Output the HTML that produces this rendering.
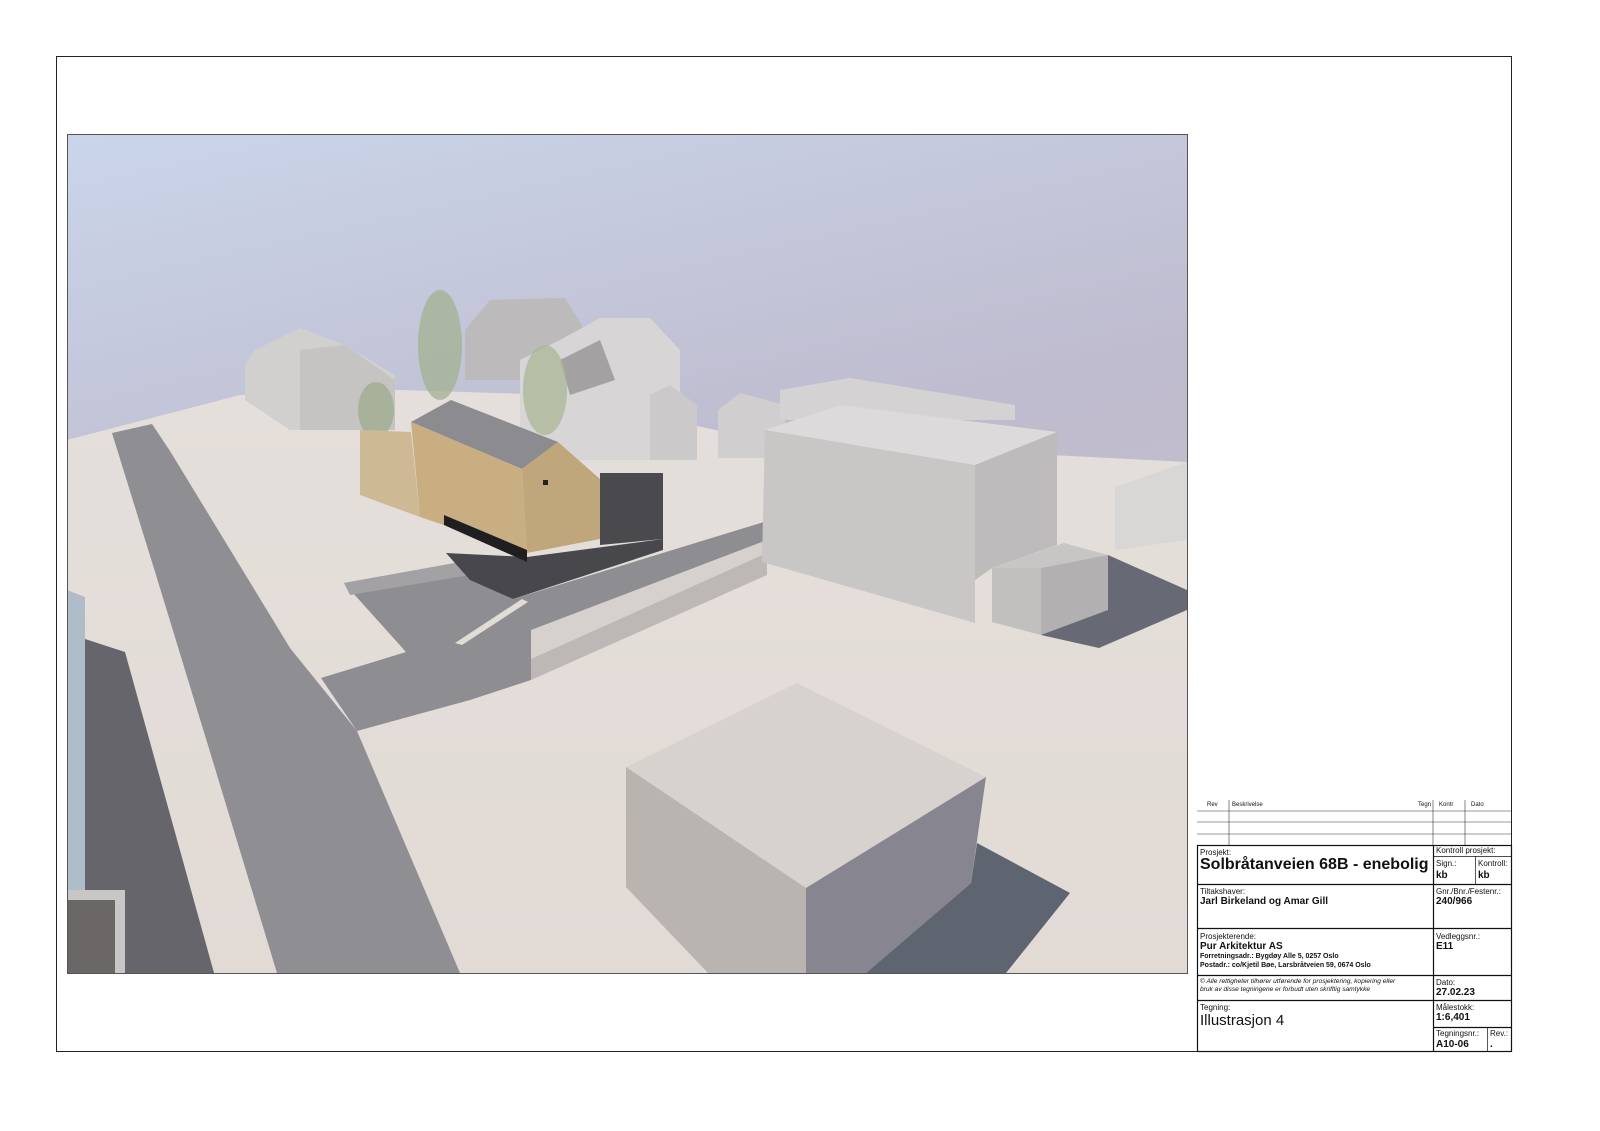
<!DOCTYPE html>
<html><head><meta charset="utf-8"><style>
html,body{margin:0;padding:0;background:#fff;}
body{width:1600px;height:1131px;position:relative;overflow:hidden;font-family:"Liberation Sans",Arial,sans-serif;}
svg{position:absolute;left:0;top:0;}
.t{position:absolute;color:#111;white-space:nowrap;}
</style></head><body>
<svg width="1600" height="1131" viewBox="0 0 1600 1131">
<defs>
<linearGradient id="sky" x1="0" y1="0" x2="0.3" y2="1">
<stop offset="0" stop-color="#cad5ea"/><stop offset="0.5" stop-color="#bfbccf"/><stop offset="1" stop-color="#c6bccb"/>
</linearGradient>
<linearGradient id="gr" x1="0" y1="0" x2="0" y2="1">
<stop offset="0" stop-color="#e5dfdb"/><stop offset="1" stop-color="#e1dad5"/>
</linearGradient>
<clipPath id="c"><rect x="67" y="134" width="1120" height="839"/></clipPath>
</defs>
<rect x="56.5" y="56.5" width="1455" height="995" fill="none" stroke="#222" stroke-width="1"/>
<g clip-path="url(#c)">
<rect x="67" y="134" width="1120" height="839" fill="url(#sky)"/>
<!-- ground -->
<polygon points="67,440 240,395 400,390 560,395 760,440 1187,462 1187,973 67,973" fill="url(#gr)"/>
<!-- back buildings -->
<polygon points="245,365 255,350 300,328 345,345 395,375 395,430 290,430 245,400" fill="#d2cfcf"/>
<polygon points="300,350 345,345 395,380 395,430 300,430" fill="#c6c3c3"/>
<polygon points="465,330 490,300 565,298 585,330 585,380 465,380" fill="#bcbaba"/>
<polygon points="520,360 560,340 600,318 650,318 680,350 680,460 520,460" fill="#d7d5d5"/>
<polygon points="560,360 600,340 615,380 570,395" fill="#a3a1a2"/>
<polygon points="650,395 670,385 697,405 697,460 650,460" fill="#cbc9c9"/>
<polygon points="718,410 740,393 785,405 785,458 718,458" fill="#d0cece"/>
<!-- road -->
<polygon points="112,433 152,424 170,451 290,648 357,731 460,973 277,973 214,765 156,575" fill="#8f8e93"/>
<!-- left building -->
<polygon points="85,639 125,652 214,973 120,973 120,890 85,890" fill="#66656b"/>
<polygon points="67,590 85,597 85,890 67,890" fill="#aebdc9"/>
<polygon points="67,890 125,890 125,973 67,973" fill="#c9c6c6"/>
<polygon points="67,900 115,900 115,973 67,973" fill="#6c6767"/>
<!-- driveway -->
<polygon points="344,583 455,563 513,599 767,521 767,553 531,659 531,680 470,700 357,731 321,678 406,652" fill="#8e8d92"/>
<polygon points="455,643 522,599 528,602 462,645" fill="#e2dcd7"/>
<polygon points="531,630 767,540 767,555 531,659" fill="#d6d1cd"/>
<polygon points="531,659 767,553 767,575 531,680" fill="#bdb8b6"/>
<polygon points="344,583 455,563 470,575 350,595" fill="#a3a1a4"/>
<!-- big right box -->
<polygon points="780,390 850,378 1015,405 1015,420 780,420" fill="#d4d2d2"/>
<polygon points="765,430 840,405 1057,432 975,465" fill="#dcdada"/>
<polygon points="765,430 975,465 975,623 762,562" fill="#c9c6c6"/>
<polygon points="975,465 1057,432 1057,545 992,568 975,580" fill="#bdbbbb"/>
<polygon points="1108,555 1187,590 1187,610 1099,648 1041,635" fill="#676a75"/>
<polygon points="992,568 1064,543 1108,555 1041,568" fill="#c8c5c5"/>
<polygon points="992,568 1041,568 1041,635 992,622" fill="#c2bfbf"/>
<polygon points="1041,568 1108,555 1108,610 1041,635" fill="#b2b0b1"/>
<polygon points="1115,487 1187,462 1187,540 1115,550" fill="#d9d6d6"/>
<!-- front box -->
<polygon points="971,883 977,843 1070,893 1006,973 866,973" fill="#5e6470"/>
<polygon points="626,767 797,683 986,777 806,888" fill="#d8d2ce"/>
<polygon points="626,767 806,888 806,973 708,973 626,887" fill="#bab4b1"/>
<polygon points="806,888 986,777 971,883 866,973 806,973" fill="#878690"/>
<!-- trees -->
<ellipse cx="440" cy="345" rx="22" ry="55" fill="#a3b190" opacity="0.75"/>
<ellipse cx="545" cy="390" rx="22" ry="45" fill="#a9b796" opacity="0.75"/>
<ellipse cx="376" cy="410" rx="18" ry="28" fill="#9eab8b" opacity="0.75"/>
<!-- main house -->
<polygon points="360,430 411,432 420,517 360,495" fill="#cdb994"/>
<polygon points="600,473 663,473 663,539 600,545" fill="#4a4a4e"/>
<polygon points="411,422 451,400 558,442 522,469" fill="#8b8b90"/>
<polygon points="411,422 522,469 527,553 420,517" fill="#c9ae82"/>
<polygon points="522,469 558,442 600,479 600,539 527,553" fill="#c0a67b"/>
<polygon points="446,553 527,557 663,539 663,550 513,599 470,580" fill="#48484c"/>
<polygon points="444,515 527,550 527,562 444,525" fill="#1f1f22"/>
<rect x="543" y="480" width="5" height="5" fill="#222"/>
</g>
<rect x="67.5" y="134.5" width="1120" height="839" fill="none" stroke="#555" stroke-width="1"/>
<!-- title block lines -->
<g stroke="#333" stroke-width="0.6" fill="none">
<line x1="1197" y1="811" x2="1511" y2="811"/>
<line x1="1197" y1="822" x2="1511" y2="822"/>
<line x1="1197" y1="834" x2="1511" y2="834"/>
<line x1="1229" y1="800" x2="1229" y2="845"/>
<line x1="1433" y1="800" x2="1433" y2="845"/>
<line x1="1465" y1="800" x2="1465" y2="845"/>
</g>
<g stroke="#111" stroke-width="1.2" fill="none">
<rect x="1197.5" y="845.5" width="314" height="206"/>
<line x1="1433.5" y1="845" x2="1433.5" y2="1051"/>
<line x1="1197" y1="884.5" x2="1511" y2="884.5"/>
<line x1="1197" y1="928.5" x2="1511" y2="928.5"/>
<line x1="1197" y1="975.5" x2="1511" y2="975.5"/>
<line x1="1197" y1="1000.5" x2="1511" y2="1000.5"/>
<line x1="1433" y1="1027.5" x2="1511" y2="1027.5"/>
<line x1="1433" y1="856.5" x2="1511" y2="856.5" stroke-width="0.7"/>
<line x1="1475.5" y1="856" x2="1475.5" y2="884" stroke-width="0.7"/>
<line x1="1487.5" y1="1027" x2="1487.5" y2="1051" stroke-width="0.7"/>
</g>
</svg>
<div class="t" style="left:1207px;top:802px;font-size:6px">Rev</div>
<div class="t" style="left:1232px;top:802px;font-size:6px">Beskrivelse</div>
<div class="t" style="left:1418px;top:802px;font-size:6px">Tegn</div>
<div class="t" style="left:1439px;top:802px;font-size:6px">Kontr</div>
<div class="t" style="left:1471px;top:802px;font-size:6px">Dato</div>
<div class="t" style="left:1200px;top:848px;font-size:8px">Prosjekt:</div>
<div class="t" style="left:1200px;top:856px;font-size:16px;font-weight:bold">Solbråtanveien 68B - enebolig</div>
<div class="t" style="left:1436px;top:846px;font-size:8px">Kontroll prosjekt:</div>
<div class="t" style="left:1436px;top:859px;font-size:8px">Sign.:</div>
<div class="t" style="left:1436px;top:870px;font-size:10px;font-weight:bold">kb</div>
<div class="t" style="left:1478px;top:859px;font-size:8px">Kontroll:</div>
<div class="t" style="left:1478px;top:870px;font-size:10px;font-weight:bold">kb</div>
<div class="t" style="left:1200px;top:887px;font-size:8px">Tiltakshaver:</div>
<div class="t" style="left:1200px;top:896px;font-size:10px;font-weight:bold">Jarl Birkeland og Amar Gill</div>
<div class="t" style="left:1436px;top:887px;font-size:8px">Gnr./Bnr./Festenr.:</div>
<div class="t" style="left:1436px;top:896px;font-size:10px;font-weight:bold">240/966</div>
<div class="t" style="left:1200px;top:932px;font-size:8px">Prosjekterende:</div>
<div class="t" style="left:1200px;top:941px;font-size:10px;font-weight:bold">Pur Arkitektur AS</div>
<div class="t" style="left:1200px;top:953px;font-size:7px;font-weight:bold">Forretningsadr.: Bygdøy Alle 5, 0257 Oslo</div>
<div class="t" style="left:1200px;top:962px;font-size:7px;font-weight:bold">Postadr.: co/Kjetil Bøe, Larsbråtveien 59, 0674 Oslo</div>
<div class="t" style="left:1436px;top:932px;font-size:8px">Vedleggsnr.:</div>
<div class="t" style="left:1436px;top:941px;font-size:10px;font-weight:bold">E11</div>
<div class="t" style="left:1200px;top:978px;font-size:6.6px;font-style:italic">© Alle rettigheter tilhører utførende for prosjektering, kopiering eller</div>
<div class="t" style="left:1200px;top:986px;font-size:6.6px;font-style:italic">bruk av disse tegningene er forbudt uten skriftlig samtykke</div>
<div class="t" style="left:1436px;top:978px;font-size:8px">Dato:</div>
<div class="t" style="left:1436px;top:987px;font-size:10px;font-weight:bold">27.02.23</div>
<div class="t" style="left:1200px;top:1003px;font-size:8px">Tegning:</div>
<div class="t" style="left:1200px;top:1012px;font-size:15px">Illustrasjon 4</div>
<div class="t" style="left:1436px;top:1003px;font-size:8px">Målestokk:</div>
<div class="t" style="left:1436px;top:1012px;font-size:10px;font-weight:bold">1:6,401</div>
<div class="t" style="left:1436px;top:1029px;font-size:8px">Tegningsnr.:</div>
<div class="t" style="left:1436px;top:1039px;font-size:10px;font-weight:bold">A10-06</div>
<div class="t" style="left:1490px;top:1029px;font-size:8px">Rev.:</div>
<div class="t" style="left:1490px;top:1039px;font-size:10px;font-weight:bold">.</div>
</body></html>
